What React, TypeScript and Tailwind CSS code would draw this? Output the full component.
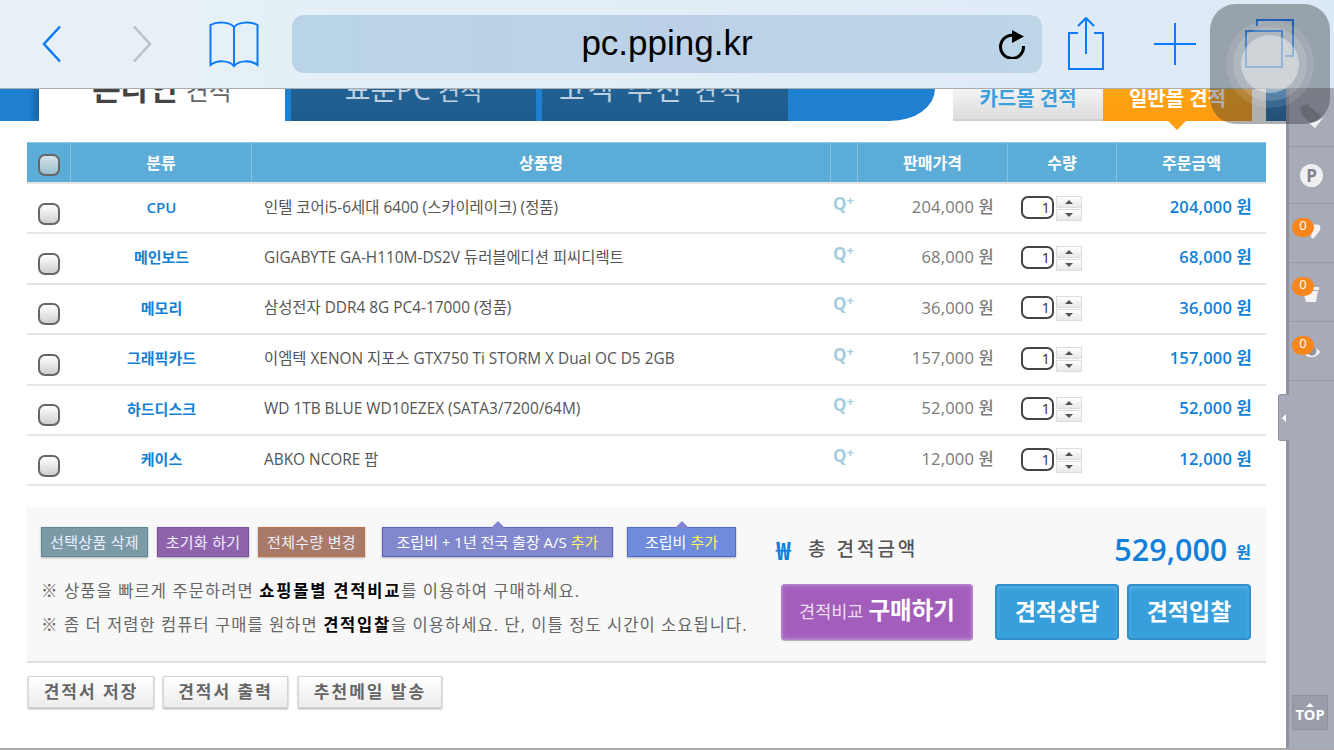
const rows = [
  { cat: "CPU", name: "인텔 코어i5-6세대 6400 (스카이레이크) (정품)", price: "204,000" },
  { cat: "메인보드", name: "GIGABYTE GA-H110M-DS2V 듀러블에디션 피씨디렉트", price: "68,000" },
  { cat: "메모리", name: "삼성전자 DDR4 8G PC4-17000 (정품)", price: "36,000" },
  { cat: "그래픽카드", name: "이엠텍 XENON 지포스 GTX750 Ti STORM X Dual OC D5 2GB", price: "157,000" },
  { cat: "하드디스크", name: "WD 1TB BLUE WD10EZEX (SATA3/7200/64M)", price: "52,000" },
  { cat: "케이스", name: "ABKO NCORE 팝", price: "12,000" },
];

const Checkbox = ({ tint }: { tint?: boolean }) => (
  <div
    className={`w-[22px] h-[22px] rounded-[7px] border-2 border-[#666] bg-gradient-to-b ${
      tint ? "from-[#d5e3ea] to-[#9dbfd0]" : "from-white to-[#cfcfcf]"
    }`}
  />
);

const Toolbar = () => (
  <div className="h-[89px] shrink-0 flex items-center pl-[42px] bg-gradient-to-r from-[#e8f1f7] to-[#dce9f6] border-b border-[#a9adb0] text-[#0a7aff]">
    <svg width="20" height="38" viewBox="0 0 20 38" fill="none" stroke="currentColor" strokeWidth="2.500">
      <path d="M18 1.500L2 19L18 36.500" />
    </svg>
    <svg className="ml-[70px] text-[#bdbfc2]" width="20" height="38" viewBox="0 0 20 38" fill="none" stroke="currentColor" strokeWidth="2.500">
      <path d="M2 1.500L18 19L2 36.500" />
    </svg>
    <svg className="ml-[57px]" width="50" height="50" viewBox="0 0 50 50" fill="none" stroke="currentColor" strokeWidth="2">
      <path d="M25 8C21 3 8 2 1.500 6V46C8 41 20 41 25 47C30 41 42 41 48.500 46V6C42 2 29 3 25 8ZM25 8V47" />
    </svg>
    <div className="ml-[33px] w-[750px] h-[58px] rounded-[12px] bg-gradient-to-r from-[#b9d4e6] via-[#bcd1e7] to-[#bcd5e7] flex items-center justify-center pb-[3px] relative text-black">
      <span className="text-[35px] font-['Liberation_Sans'] leading-none">pc.pping.kr</span>
      <svg className="absolute right-[16px] top-[14px]" width="28" height="30" viewBox="0 0 28 30" fill="none">
        <path d="M19 7.500A11.500 11.500 0 1 0 25.500 17" stroke="black" strokeWidth="3" />
        <path d="M14 1L26 7.500L14 14Z" fill="black" />
      </svg>
    </div>
    <svg className="ml-[26px]" width="36" height="54" viewBox="0 0 36 54" fill="none" stroke="currentColor" strokeWidth="2">
      <path d="M10 16H1V52H35V16H26M18 37V1M10 9L18 1L26 9" />
    </svg>
    <svg className="ml-[50px]" width="42" height="42" viewBox="0 0 42 42" fill="none" stroke="currentColor" strokeWidth="2">
      <path d="M0 21H42M21 0V42" />
    </svg>
    <svg className="ml-[49px]" width="50" height="50" viewBox="0 0 50 50" fill="none" stroke="currentColor" strokeWidth="2">
      <rect x="1" y="12" width="36" height="36" />
      <path d="M12 7V1H48V37H40" />
    </svg>
  </div>
);

const TabStrip = () => (
  <div className="h-[32px] flex relative">
    <div className="w-[935px] shrink-0 bg-[#1f80d2] rounded-br-[45px_32px] flex pl-[39px] gap-[6px] overflow-hidden">
      <div className="w-[246px] bg-white flex justify-center overflow-hidden shadow-[-6px_0_6px_rgba(0,0,0,0.2)]">
        <span className="text-[31px] font-bold leading-none text-[#444] -mt-[16px] whitespace-nowrap">
          온라인 <span className="font-normal text-[25px] text-[#666]">견적</span>
        </span>
      </div>
      <div className="w-[245px] bg-gradient-to-b from-[#236192] to-[#1e5c8d] flex justify-center overflow-hidden">
        <span className="text-[28px] leading-none text-[#bcd0e0] -mt-[14px] whitespace-nowrap">
          표준PC <span className="text-[24px]">견적</span>
        </span>
      </div>
      <div className="w-[246px] bg-gradient-to-b from-[#236192] to-[#1e5c8d] flex justify-center pr-[26px] overflow-hidden">
        <span className="text-[28px] tracking-[3px] leading-none text-[#bcd0e0] -mt-[14px] whitespace-nowrap">
          고객 추천 <span className="text-[24px]">견적</span>
        </span>
      </div>
    </div>
    <div className="ml-[18px] w-[150px] shrink-0 bg-gradient-to-b from-[#f4f4f4] to-[#dcdcdc] border-b-2 border-[#cfcfcf] flex justify-center overflow-hidden">
      <span className="text-[20px] font-bold leading-none text-[#3a9fdf] whitespace-nowrap">카드몰 견적</span>
    </div>
    <div className="w-[149px] shrink-0 bg-gradient-to-b from-[#ffa516] to-[#ff9a0e] flex justify-center overflow-hidden">
      <span className="text-[20px] font-bold leading-none text-white whitespace-nowrap">일반몰 견적</span>
    </div>
    <div className="absolute left-[1168px] -bottom-[9px] w-0 h-0 border-x-[9px] border-x-transparent border-t-[9px] border-t-[#ff9f12]" />
    <div className="ml-[14px] w-[20px] shrink-0 bg-gradient-to-b from-[#1f7cc8] to-[#185f9a]" />
  </div>
);

const Head = ({ className, label }: { className: string; label?: string }) => (
  <div className={`${className} flex items-center justify-center border-r border-[#86c1e0] text-white text-[16px] font-bold`}>
    {label}
  </div>
);

const Table = () => (
  <div className="mt-[21px] ml-[27px] w-[1239px]">
    <div className="h-[42px] bg-[#5bacd6] border-t border-[#8cc6e3] border-b-2 border-b-[#e4e4e4] flex">
      <div className="w-[44px] flex justify-center items-start pt-[11px] border-r border-[#86c1e0]">
        <Checkbox tint />
      </div>
      <Head className="w-[181px]" label="분류" />
      <Head className="w-[579px]" label="상품명" />
      <Head className="w-[27px]" />
      <Head className="w-[150px]" label="판매가격" />
      <Head className="w-[109px]" label="수량" />
      <div className="flex-1 flex items-center justify-center text-white text-[16px] font-bold">주문금액</div>
    </div>
    {rows.map((r) => (
      <div key={r.cat} className="h-[50.4px] flex items-center pb-[2px] border-b-2 border-[#e5e5e5]">
        <div className="w-[44px] flex justify-center pt-[13px]">
          <Checkbox />
        </div>
        <div className="w-[181px] text-center text-[15px] font-semibold text-[#1180d8]">{r.cat}</div>
        <div className="w-[579px] pl-[12px] text-[15.400px] text-[#555]">{r.name}</div>
        <div className="w-[27px] pl-[2px] -mt-[8px] font-['Open_Sans'] font-bold text-[17px] leading-none text-[#a5cde0]">
          Q<sup className="text-[13px] -top-[5px]">+</sup>
        </div>
        <div className="w-[136px] text-right text-[16.500px] tracking-[0.2px] font-medium text-[#7a7a7a]">{r.price} 원</div>
        <div className="w-[13px]" />
        <div className="w-[109px] flex pl-[14px] gap-[2px] mt-[2px]">
          <div className="w-[33px] h-[23px] rounded-[7px] border-2 border-[#444] bg-white text-[15px] leading-[19px] text-right pr-[2px] text-[#333]">
            1
          </div>
          <div className="w-[26px] flex flex-col gap-[1px]">
            <div className="h-[12px] border border-[#ddd] bg-gradient-to-b from-white to-[#e8e8e8] flex justify-center items-center">
              <div className="w-0 h-0 border-x-[4px] border-x-transparent border-b-[4px] border-b-[#555]" />
            </div>
            <div className="h-[12px] border border-[#ddd] bg-gradient-to-b from-white to-[#e8e8e8] flex justify-center items-center">
              <div className="w-0 h-0 border-x-[4px] border-x-transparent border-t-[4px] border-t-[#555]" />
            </div>
          </div>
        </div>
        <div className="flex-1 text-right pr-[14px] text-[16.500px] tracking-[0.2px] font-semibold text-[#1180d8]">{r.price} 원</div>
      </div>
    ))}
  </div>
);

const ActionBtn = ({ label, className }: { label: string; className: string }) => (
  <div className={`h-[30px] flex items-center justify-center text-[15px] tracking-[0.3px] text-[#eef] border shadow-[0_1px_2px_rgba(0,0,0,0.3)] ${className}`}>
    {label}
  </div>
);

const AddBtn = ({ label, className }: { label: string; className: string }) => (
  <div className={`relative h-[30px] flex items-center justify-center gap-[4px] text-[15px] text-white border shadow-[0_1px_2px_rgba(0,0,0,0.3)] ${className}`}>
    {label} <span className="text-[#fff35c]">추가</span>
    <div className="absolute -top-[7px] left-1/2 -ml-[7px] w-0 h-0 border-x-[7px] border-x-transparent border-b-[7px] border-b-[#7f86cf]" />
  </div>
);

const Summary = () => (
  <div className="mt-[20.600px] ml-[27px] w-[1239px] h-[156px] bg-[#f8f8f8] border-b-2 border-[#dedede] flex">
    <div className="w-[749px] pl-[14px] pt-[20px]">
      <div className="flex">
        <ActionBtn label="선택상품 삭제" className="w-[107px] bg-[#7b9aa5] border-[#5f8794]" />
        <ActionBtn label="초기화 하기" className="w-[92px] ml-[9px] bg-[#8f63ab] border-[#7d4fa0]" />
        <ActionBtn label="전체수량 변경" className="w-[107px] ml-[9px] bg-[#a97a67] border-[#c26f4d]" />
        <AddBtn label="조립비 + 1년 전국 출장 A/S" className="w-[231px] ml-[17px] bg-[#8288cd] border-[#5a63c0]" />
        <AddBtn label="조립비" className="w-[109px] ml-[14px] bg-[#6f8cdc] border-[#4f6cc8]" />
      </div>
      <p className="mt-[22px] text-[16.500px] leading-[24px] tracking-[1.100px] text-[#666] whitespace-nowrap">
        ※ 상품을 빠르게 주문하려면 <b className="text-black tracking-[1.800px]">쇼핑몰별 견적비교</b>를 이용하여 구매하세요.
      </p>
      <p className="mt-[10px] text-[16.500px] leading-[24px] tracking-[1.050px] text-[#666] whitespace-nowrap">
        ※ 좀 더 저렴한 컴퓨터 구매를 원하면 <b className="text-black tracking-[1.800px]">견적입찰</b>을 이용하세요. 단, 이틀 정도 시간이 소요됩니다.
      </p>
    </div>
    <div className="flex-1 pl-[5px] pr-[15px]">
      <div className="h-[77px] flex items-center pt-[8px]">
        <span className="text-[#1180d8] text-[25px] font-bold w-[32px] -ml-[5px] mt-[2px]">₩</span>
        <span className="text-[19px] font-medium tracking-[3px] text-[#555]">총 견적금액</span>
        <span className="ml-auto font-['Open_Sans'] text-[30.500px] font-semibold text-[#1180d8] leading-none">529,000</span>
        <span className="ml-[9px] mt-[6px] text-[16px] font-semibold text-[#1180d8]">원</span>
      </div>
      <div className="flex">
        <div className="w-[192px] h-[56px] rounded-[4px] bg-[#a35dbb] border-2 border-[#b77bcb] flex items-center justify-center gap-[5px] pb-[2px] text-white shadow-[0_1px_1px_rgba(0,0,0,0.3),inset_0_0_6px_rgba(255,255,255,0.15)]">
          <span className="text-[17.500px] text-[#eadcf0]">견적비교</span>
          <span className="text-[23.500px] font-bold">구매하기</span>
        </div>
        <div className="w-[124px] h-[56px] ml-[22px] rounded-[4px] bg-[#379fdc] border-2 border-[#2f8fcb] flex items-center justify-center pb-[2px] text-[23px] font-bold text-white shadow-[inset_0_2px_4px_rgba(255,255,255,0.2)]">
          견적상담
        </div>
        <div className="w-[124px] h-[56px] ml-[8px] rounded-[4px] bg-[#379fdc] border-2 border-[#2f8fcb] flex items-center justify-center pb-[2px] text-[23px] font-bold text-white shadow-[inset_0_2px_4px_rgba(255,255,255,0.2)]">
          견적입찰
        </div>
      </div>
    </div>
  </div>
);

const FootBtn = ({ label, className }: { label: string; className: string }) => (
  <div className={`h-[32px] bg-gradient-to-b from-white to-[#ececec] border border-[#d5d5d5] shadow-[0_1px_2px_rgba(0,0,0,0.35)] flex items-center justify-center pb-[1px] text-[17px] font-bold tracking-[2px] text-[#666] ${className}`}>
    {label}
  </div>
);

const Badge = () => (
  <div className="absolute left-[3px] top-[14px] w-[22px] h-[19px] rounded-full bg-[#f7871c] text-white text-[13px] leading-[15px] text-center">0</div>
);

const Sidebar = () => (
  <div className="w-[48px] bg-[#a7aab7] border-l-[3px] border-[#8f92a0] relative flex flex-col">
    <div className="h-[58px] border-b border-[#9699a6] flex justify-center items-end pb-[18px]">
      <svg width="26" height="26" viewBox="0 0 26 26">
        <path d="M1 5L8 2L22 14C20 17 15 20 11 21L3 13Z" fill="#888a96" />
        <path d="M25 15L16 26L10 21C15 21 21 18 25 15Z" fill="#f2f2f2" />
      </svg>
    </div>
    <div className="h-[57px] border-b border-[#9699a6] flex justify-center items-center">
      <div className="w-[23px] h-[23px] rounded-full bg-[#f0f0f0] text-[#7f828e] font-['Open_Sans'] font-bold text-[17px] leading-[23px] text-center">P</div>
    </div>
    <div className="h-[59px] border-b border-[#9699a6] relative">
      <svg className="absolute left-[14px] top-[17px]" width="20" height="22" viewBox="0 0 24 24">
        <path d="M8 3H18C21 3 22 8 19 12L12 20L9 18L11 16H6Z" fill="#f3f3f3" />
      </svg>
      <Badge />
    </div>
    <div className="h-[59px] border-b border-[#9699a6] relative">
      <svg className="absolute left-[9px] top-[18px]" width="24" height="24" viewBox="0 0 24 24">
        <path d="M6 6H21V9H6ZM5 10H20L18 21H8Z" fill="#f3f3f3" />
      </svg>
      <Badge />
    </div>
    <div className="h-[59px] border-b border-[#9699a6] relative">
      <svg className="absolute left-[12px] top-[19px]" width="22" height="22" viewBox="0 0 24 24" fill="none">
        <path d="M3 13C8 5 16 5 21 12C16 19 8 20 3 13Z" fill="#f3f3f3" />
        <circle cx="12" cy="11" r="5" fill="#8f92a0" />
      </svg>
      <Badge />
    </div>
    <div className="absolute -left-[11px] top-[305px] w-[11px] h-[47px] bg-[#a7aab7] border border-r-0 border-[#8f92a0] rounded-l-[3px] flex items-center justify-center">
      <div className="w-0 h-0 border-y-[4px] border-y-transparent border-r-[4px] border-r-white" />
    </div>
    <div className="mt-auto mb-[18px] ml-[3px] w-[36px] h-[35px] border border-[#8f92a0] bg-[#9a9daa] flex flex-col items-center justify-center text-white">
      <div className="w-0 h-0 border-x-[4px] border-x-transparent border-b-[4px] border-b-white" />
      <span className="font-['Open_Sans'] text-[14.500px] font-bold leading-[16px]">TOP</span>
    </div>
  </div>
);

export default function App() {
  return (
    <div className="w-[1334px] h-[750px] relative overflow-hidden bg-white flex flex-col font-['Open_Sans','Noto_Sans_CJK_KR',sans-serif] border-b-2 border-[#a9a9a9]">
      <Toolbar />
      <div className="flex-1 flex min-h-0">
        <div className="w-[1286px] shrink-0 relative">
          <TabStrip />
          <Table />
          <Summary />
          <div className="mt-[13px] ml-[28px] flex">
            <FootBtn label="견적서 저장" className="w-[126px]" />
            <FootBtn label="견적서 출력" className="w-[125px] ml-[9px]" />
            <FootBtn label="추천메일 발송" className="w-[144px] ml-[10px]" />
          </div>
        </div>
        <Sidebar />
      </div>
      {/* assistive touch floats over everything */}
      <div className="absolute left-[1210px] top-[4px] w-[120px] h-[120px] rounded-[26px] bg-[rgba(50,55,60,0.4)] flex items-center justify-center">
        <div className="w-[88px] h-[88px] rounded-full bg-white/10 flex items-center justify-center">
          <div className="w-[74px] h-[74px] rounded-full bg-white/15 flex items-center justify-center">
            <div className="w-[58px] h-[58px] rounded-full bg-white/40" />
          </div>
        </div>
      </div>
    </div>
  );
}
